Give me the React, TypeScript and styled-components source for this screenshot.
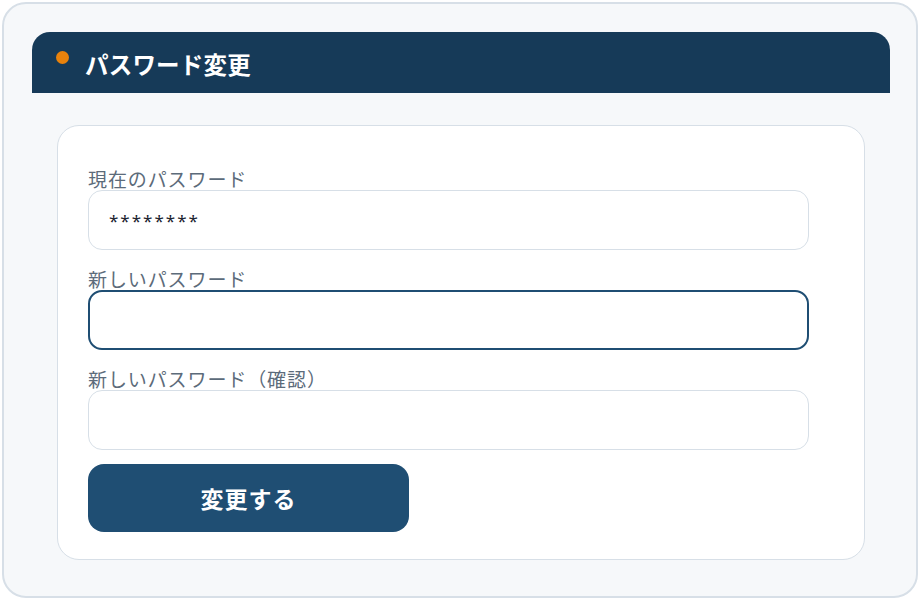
import styled, { createGlobalStyle } from 'styled-components'

const GlobalStyle = createGlobalStyle`
	html, body {
		margin: 0;
		padding: 0;
		background: #ffffff;
	}
	body {
		font-family: "Noto Sans CJK JP", "Noto Sans", sans-serif;
	}
	* {
		box-sizing: border-box;
	}
`

const Frame = styled.div`
	margin: 2px;
	width: 916px;
	height: 596px;
	padding: 28px 26px 0 28px;
	background: #f6f8fa;
	border: 2px solid #d7dfe7;
	border-radius: 24px;
`

const Header = styled.div`
	display: flex;
	align-items: center;
	gap: 16px;
	height: 61px;
	padding-left: 24px;
	background: #163a58;
	border-radius: 18px 18px 0 0;
`

const Dot = styled.span`
	width: 13px;
	height: 13px;
	border-radius: 50%;
	background: #e8820c;
	transform: translateY(-5px);
`

const Title = styled.h2`
	margin: 0;
	color: #ffffff;
	font-size: 23.5px;
	font-weight: 700;
	line-height: 1;
	letter-spacing: 0.2px;
	transform: translateY(2px);
`

const Card = styled.div`
	margin: 32px 25px 0 25px;
	height: 435px;
	padding: 42px 30px 0 30px;
	background: #ffffff;
	border: 1.5px solid #d7dfe7;
	border-radius: 22px;
`

const Form = styled.form`
	display: flex;
	flex-direction: column;
	width: 721px;
`

const Field = styled.label`
	display: flex;
	flex-direction: column;
	margin-bottom: 18px;
`

const Label = styled.span`
	color: #5c6b7a;
	font-size: 19px;
	line-height: 22px;
	letter-spacing: 0.9px;
`

const Input = styled.input<{ $focused?: boolean }>`
	height: 60px;
	padding: 0 20px;
	border: ${(p) => (p.$focused ? '2px solid #1f4e73' : '1px solid #d7dfe7')};
	border-radius: 14px;
	background: #ffffff;
	color: #1b2430;
	font-family: "Noto Sans", sans-serif;
	font-size: 17px;
	letter-spacing: 2px;
	outline: none;
`

const SubmitButton = styled.button`
	margin-top: -4px;
	width: 321px;
	height: 68px;
	border: none;
	border-radius: 16px;
	background: #1f4e73;
	color: #ffffff;
	font-family: "Noto Sans CJK JP", sans-serif;
	font-size: 23px;
	font-weight: 700;
	letter-spacing: 1px;
	cursor: pointer;
`

export default function App() {
	return (
		<>
			<GlobalStyle />
			<Frame>
				<Header>
					<Dot />
					<Title>パスワード変更</Title>
				</Header>
				<Card>
					<Form onSubmit={(e) => e.preventDefault()}>
						<Field>
							<Label>現在のパスワード</Label>
							<Input type="text" defaultValue="********" readOnly />
						</Field>
						<Field>
							<Label>新しいパスワード</Label>
							<Input type="password" $focused />
						</Field>
						<Field>
							<Label>新しいパスワード（確認）</Label>
							<Input type="password" />
						</Field>
						<SubmitButton type="submit">変更する</SubmitButton>
					</Form>
				</Card>
			</Frame>
		</>
	)
}
